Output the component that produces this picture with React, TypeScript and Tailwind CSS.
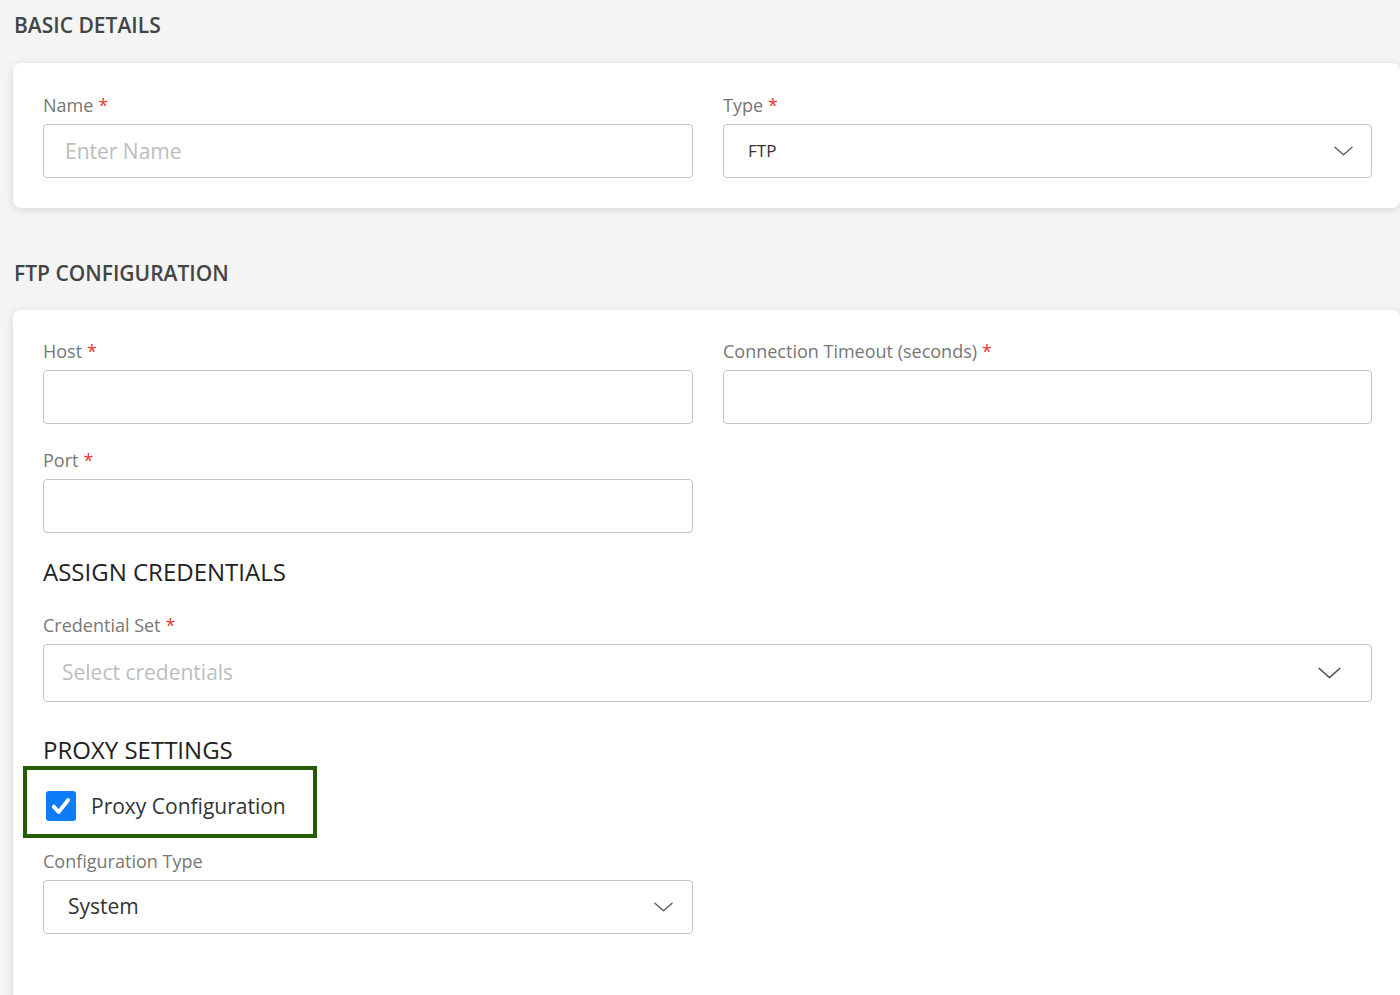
import React from "react";

function Chevron({ className }: { className: string }) {
  return (
    <svg viewBox="0 0 20 10" fill="none" className={className}>
      <path d="M1 1l9 8 9-8" stroke="#555" strokeWidth="1.3" strokeLinecap="round" strokeLinejoin="round" />
    </svg>
  );
}

function Label({ text, required = true }: { text: string; required?: boolean }) {
  return (
    <div className="text-[18px] leading-6 text-[#777] mb-[7px]">
      {text}
      {required && <span className="text-[#e53935] ml-[5px]">*</span>}
    </div>
  );
}

function TextInput({ placeholder = "" }: { placeholder?: string }) {
  return (
    <input
      placeholder={placeholder}
      className="w-full h-[54px] border border-[#c4c4c4] rounded-[4px] bg-white px-[21px] text-[21px] text-[#333] placeholder:text-[#bdbdbd] outline-none"
    />
  );
}

export default function App() {
  return (
    <div
      className="h-[995px] overflow-hidden bg-[#f4f4f4]"
      style={{ fontFamily: "'Open Sans', 'Noto Sans', sans-serif" }}
    >
      {/* Basic details */}
      <h2 className="pt-[11px] pl-[14px] text-[21px] leading-7 font-semibold text-[#444]">BASIC DETAILS</h2>
      <div className="mt-[24px] ml-[13px] w-[1387px] bg-white rounded-[8px] shadow-[0_2px_8px_rgba(0,0,0,0.12)] pl-[30px] pr-[28px] pt-[30px] pb-[30px]">
        <div className="grid grid-cols-[650px_649px] gap-[30px]">
          <div>
            <Label text="Name" />
            <TextInput placeholder="Enter Name" />
          </div>
          <div>
            <Label text="Type" />
            <div className="h-[54px] border border-[#c4c4c4] rounded-[4px] flex items-center justify-between pl-[24px] pr-[18px]">
              <span className="text-[17px] text-[#333]">FTP</span>
              <Chevron className="w-[19px] h-[10px]" />
            </div>
          </div>
        </div>
      </div>

      {/* FTP configuration */}
      <h2 className="mt-[51px] pl-[14px] text-[21px] leading-7 font-semibold text-[#444]">FTP CONFIGURATION</h2>
      <div className="mt-[23px] ml-[13px] w-[1387px] bg-white rounded-[8px] shadow-[0_2px_8px_rgba(0,0,0,0.12)] pl-[30px] pr-[28px] pt-[29px] pb-[120px]">
        <div className="grid grid-cols-[650px_649px] gap-x-[30px] gap-y-[24px]">
          <div>
            <Label text="Host" />
            <TextInput />
          </div>
          <div>
            <Label text="Connection Timeout (seconds)" />
            <TextInput />
          </div>
          <div>
            <Label text="Port" />
            <TextInput />
          </div>
        </div>

        <h3 className="mt-[24px] text-[24px] leading-[30px] text-[#222]">ASSIGN CREDENTIALS</h3>
        <div className="mt-[26px]">
          <Label text="Credential Set" />
          <div className="h-[58px] border border-[#c4c4c4] rounded-[4px] flex items-center justify-between pl-[18px] pr-[30px]">
            <span className="text-[21px] text-[#bdbdbd]">Select credentials</span>
            <Chevron className="w-[23px] h-[12px]" />
          </div>
        </div>

        <h3 className="mt-[33px] text-[24px] leading-[30px] text-[#222]">PROXY SETTINGS</h3>
        <div className="mt-[1px] -ml-[20px] w-[294px] h-[72px] border-[4px] border-[#245c00] flex items-start pt-[21px] pl-[19px]">
          <span className="w-[30px] h-[30px] rounded-[3px] bg-[#0d7cf8] flex items-center justify-center">
            <svg viewBox="0 0 20 20" className="w-[24px] h-[24px]" fill="none">
              <path d="M4 10.5l4 4.5 8-10" stroke="#fff" strokeWidth="3.2" strokeLinecap="round" strokeLinejoin="round" />
            </svg>
          </span>
          <span className="ml-[15px] text-[21px] leading-[30px] text-[#333]">Proxy Configuration</span>
        </div>

        <div className="mt-[11px] w-[650px]">
          <div className="text-[18px] leading-6 text-[#777] mb-[7px]">Configuration Type</div>
          <div className="h-[54px] border border-[#c4c4c4] rounded-[4px] flex items-center justify-between pl-[24px] pr-[19px]">
            <span className="text-[21px] text-[#333]">System</span>
            <Chevron className="w-[19px] h-[10px]" />
          </div>
        </div>
      </div>
    </div>
  );
}
